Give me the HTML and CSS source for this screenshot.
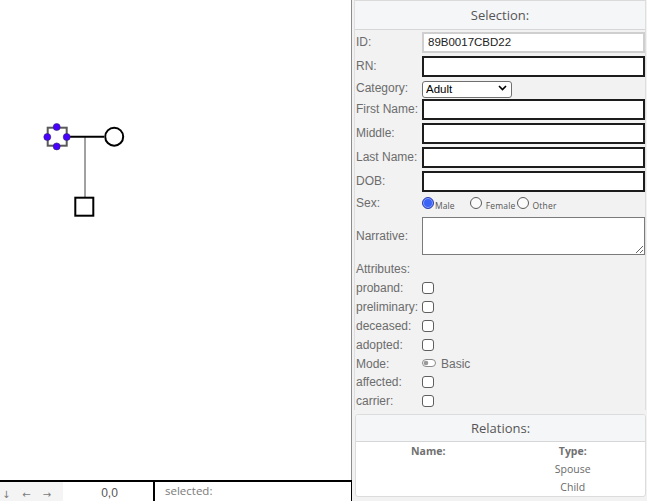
FILE: index.html
```html
<!DOCTYPE html>
<html>
<head>
<meta charset="utf-8">
<link rel="stylesheet" href="styles.css">
</head>
<body>
<div class="app">
  <div class="left">
    <div class="canvas">
      <svg class="pedigree" width="351" height="480" viewBox="0 0 351 480">
        <line x1="85" y1="137" x2="85" y2="197" stroke="#444" stroke-width="1"/>
        <line x1="67" y1="136.7" x2="104" y2="136.7" stroke="#000" stroke-width="2"/>
        <rect x="47.7" y="127.7" width="19" height="18" fill="#fff" stroke="#5a5a5a" stroke-width="2"/>
        <circle cx="56.7" cy="127" r="3.5" fill="#4a00ff" stroke="#2a2a6a" stroke-width="0.6"/>
        <circle cx="56.7" cy="146.4" r="3.5" fill="#4a00ff" stroke="#2a2a6a" stroke-width="0.6"/>
        <circle cx="47.3" cy="137" r="3.5" fill="#4a00ff" stroke="#2a2a6a" stroke-width="0.6"/>
        <circle cx="66.7" cy="137" r="3.5" fill="#4a00ff" stroke="#2a2a6a" stroke-width="0.6"/>
        <circle cx="114.2" cy="136.7" r="9" fill="#fff" stroke="#000" stroke-width="2"/>
        <rect x="75.3" y="197.7" width="18" height="18" fill="#fff" stroke="#000" stroke-width="2"/>
      </svg>
    </div>
    <div class="status">
      <div class="arrows"><span class="arr">↓</span><span class="arr">←</span><span class="arr">→</span></div>
      <div class="coords">0,0</div>
      <div class="selected">selected:</div>
    </div>
  </div>
  <div class="right">
    <div class="sel-card">
      <div class="card-head">Selection:</div>
      <div class="form">
        <div class="row"><label class="lbl">ID:</label><input class="txt ro" type="text" value="89B0017CBD22" readonly></div>
        <div class="row"><label class="lbl">RN:</label><input class="txt" type="text"></div>
        <div class="row sm"><label class="lbl">Category:</label>
          <span class="select-wrap"><select class="sel"><option>Adult</option></select>
            <svg class="chev" width="9" height="6" viewBox="0 0 9 6"><path d="M1 1 L4.5 4.5 L8 1" fill="none" stroke="#000" stroke-width="1.6"/></svg>
          </span>
        </div>
        <div class="row"><label class="lbl">First Name:</label><input class="txt" type="text"></div>
        <div class="row"><label class="lbl">Middle:</label><input class="txt" type="text"></div>
        <div class="row"><label class="lbl">Last Name:</label><input class="txt" type="text"></div>
        <div class="row"><label class="lbl">DOB:</label><input class="txt" type="text"></div>
        <div class="row sex"><label class="lbl">Sex:</label>
          <div class="radios">
            <span class="radio on"></span><span class="rlabel">Male</span>
            <span class="radio gap"></span><span class="rlabel wide">Female</span>
            <span class="radio"></span><span class="rlabel wide">Other</span>
          </div>
        </div>
        <div class="row narr"><label class="lbl">Narrative:</label><textarea class="area"></textarea></div>
        <div class="row sm"><label class="lbl">Attributes:</label></div>
        <div class="row sm"><label class="lbl">proband:</label><input class="chk" type="checkbox"></div>
        <div class="row sm"><label class="lbl">preliminary:</label><input class="chk" type="checkbox"></div>
        <div class="row sm"><label class="lbl">deceased:</label><input class="chk" type="checkbox"></div>
        <div class="row sm"><label class="lbl">adopted:</label><input class="chk" type="checkbox"></div>
        <div class="row sm"><label class="lbl">Mode:</label>
          <svg class="toggle" width="14" height="8" viewBox="0 0 14 8"><rect x="0.5" y="0.5" width="13" height="7" rx="3.5" fill="#fff" stroke="#8a8a8a" stroke-width="1"/><circle cx="4" cy="4" r="2.3" fill="#9a9a9a"/></svg>
          <span class="mode-text">Basic</span>
        </div>
        <div class="row xs"><label class="lbl">affected:</label><input class="chk" type="checkbox"></div>
        <div class="row xs"><label class="lbl">carrier:</label><input class="chk" type="checkbox"></div>
      </div>
    </div>
    <div class="rel-card">
      <div class="card-head rel-head">Relations:</div>
      <table class="rel-table">
        <tr><th>Name:</th><th>Type:</th></tr>
        <tr><td></td><td>Spouse</td></tr>
        <tr><td></td><td>Child</td></tr>
      </table>
    </div>
  </div>
</div>
</body>
</html>
```

FILE: styles.css
```css
html, body {
  margin: 0;
  padding: 0;
  background: #fff;
}
.app {
  display: flex;
  width: 647px;
  height: 501px;
  overflow: hidden;
}
.left {
  width: 352px;
  display: flex;
  flex-direction: column;
  flex: none;
}
.canvas {
  height: 480px;
  border-right: 1px solid #8c8c8c;
  background: #fff;
  box-sizing: border-box;
}
.pedigree {
  display: block;
}
.status {
  border-top: 2px solid #000;
  border-right: 1px solid #000;
  height: 30px;
  display: flex;
  box-sizing: border-box;
  font-family: "Liberation Sans", Arial, sans-serif;
}
.arrows {
  width: 63px;
  background: #f4f4f5;
  display: flex;
  padding-left: 2px;
  box-sizing: border-box;
}
.arr {
  width: 22.5px;
  font-size: 10px;
  color: #7a7a7a;
  padding-top: 7px;
  font-family: "DejaVu Sans", sans-serif;
}
.coords {
  width: 92px;
  padding-left: 3px;
  box-sizing: border-box;
  text-align: center;
  font-size: 12px;
  color: #555;
  border-right: 2px solid #000;
  padding-top: 4px;
}
.selected {
  padding-left: 10px;
  padding-top: 1px;
  font-family: "Open Sans", sans-serif;
  font-size: 11.5px;
  color: #7a7a7a;
}
.right {
  flex: 1;
  background: #f2f2f2;
  padding: 0 1px 0 2px;
  display: flex;
  flex-direction: column;
}
.sel-card {
  border-top: 1px solid #dadada;
  border-left: 1px solid #dedede;
  border-right: 1px solid #dedede;
}
.card-head {
  height: 28px;
  background: #f5f6f8;
  border-bottom: 1px solid #d6d6d6;
  display: flex;
  align-items: center;
  justify-content: center;
  font-family: "Open Sans", sans-serif;
  font-size: 13px;
  color: #555;
}
.form {
  padding-left: 1px;
}
.row {
  display: flex;
  align-items: center;
  height: 24px;
}
.row.sm {
  height: 19px;
}
.row.xs {
  height: 18.5px;
}
.row.sex {
  height: 20px;
}
.row.narr {
  height: 46px;
}
.lbl {
  width: 66px;
  flex: none;
  font-family: "Liberation Sans", Arial, sans-serif;
  font-size: 12px;
  color: #6c6c6c;
  white-space: nowrap;
}
.txt {
  width: 223px;
  height: 21px;
  box-sizing: border-box;
  border: 2px solid #1c1c1c;
  background: #fff;
  margin: 0;
  padding: 0 4px;
  font-family: "Liberation Sans", Arial, sans-serif;
  font-size: 11.5px;
  color: #222;
  outline: none;
}
.txt.ro {
  border-color: #cfcfcf;
}
.select-wrap {
  position: relative;
  display: inline-block;
  width: 90px;
  height: 17px;
}
.sel {
  appearance: none;
  -webkit-appearance: none;
  width: 90px;
  height: 17px;
  box-sizing: border-box;
  border: 1px solid #6f6f6f;
  border-radius: 3px;
  background: #fff;
  margin: 0;
  padding: 0 0 0 3px;
  font-family: "Liberation Sans", Arial, sans-serif;
  font-size: 11.5px;
  color: #000;
}
.chev {
  position: absolute;
  right: 5px;
  top: 6px;
}
.radios {
  display: flex;
  align-items: center;
}
.radio {
  width: 12px;
  height: 12px;
  box-sizing: border-box;
  border: 1px solid #5a5a5a;
  border-radius: 50%;
  background: #fbfbfb;
  flex: none;
}
.radio.on {
  border: 1px solid #2a3fb0;
  background: #3b63f6;
  box-shadow: inset 0 0 0 1px #8fa6ff;
}
.radio.gap {
  margin-left: 15px;
}
.rlabel {
  font-family: "Open Sans", sans-serif;
  font-size: 8.5px;
  color: #555;
  margin-left: 1px;
  margin-top: 5px;
  letter-spacing: 0.1px;
}
.rlabel.wide {
  margin-left: 4px;
  margin-right: 1px;
  letter-spacing: 0.2px;
}
.area {
  width: 223px;
  height: 38px;
  box-sizing: border-box;
  border: 1px solid #7a7a7a;
  background: #fff;
  margin: 0;
  padding: 2px;
  resize: both;
}
.chk {
  appearance: none;
  -webkit-appearance: none;
  width: 12px;
  height: 12px;
  margin: 0;
  box-sizing: border-box;
  border: 1px solid #5f5f5f;
  border-radius: 3px;
  background: #fff;
}
.toggle {
  display: block;
  margin-top: -2px;
}
.mode-text {
  font-family: "Liberation Sans", Arial, sans-serif;
  font-size: 12px;
  color: #6c6c6c;
  margin-left: 5px;
}
.rel-card {
  margin: 4px 0 0 1px;
  border: 1px solid #dcdcdc;
  border-radius: 3px;
  background: #fff;
  overflow: hidden;
}
.rel-head {
  box-sizing: border-box;
  height: 27px;
}
.rel-table {
  width: 100%;
  border-collapse: collapse;
  table-layout: fixed;
  font-family: "Open Sans", sans-serif;
  font-size: 10.5px;
  color: #6a6a6a;
}
.rel-table th,
.rel-table td {
  height: 18px;
  padding: 0;
  text-align: center;
}
.rel-table th {
  font-weight: bold;
  color: #707070;
}
```
